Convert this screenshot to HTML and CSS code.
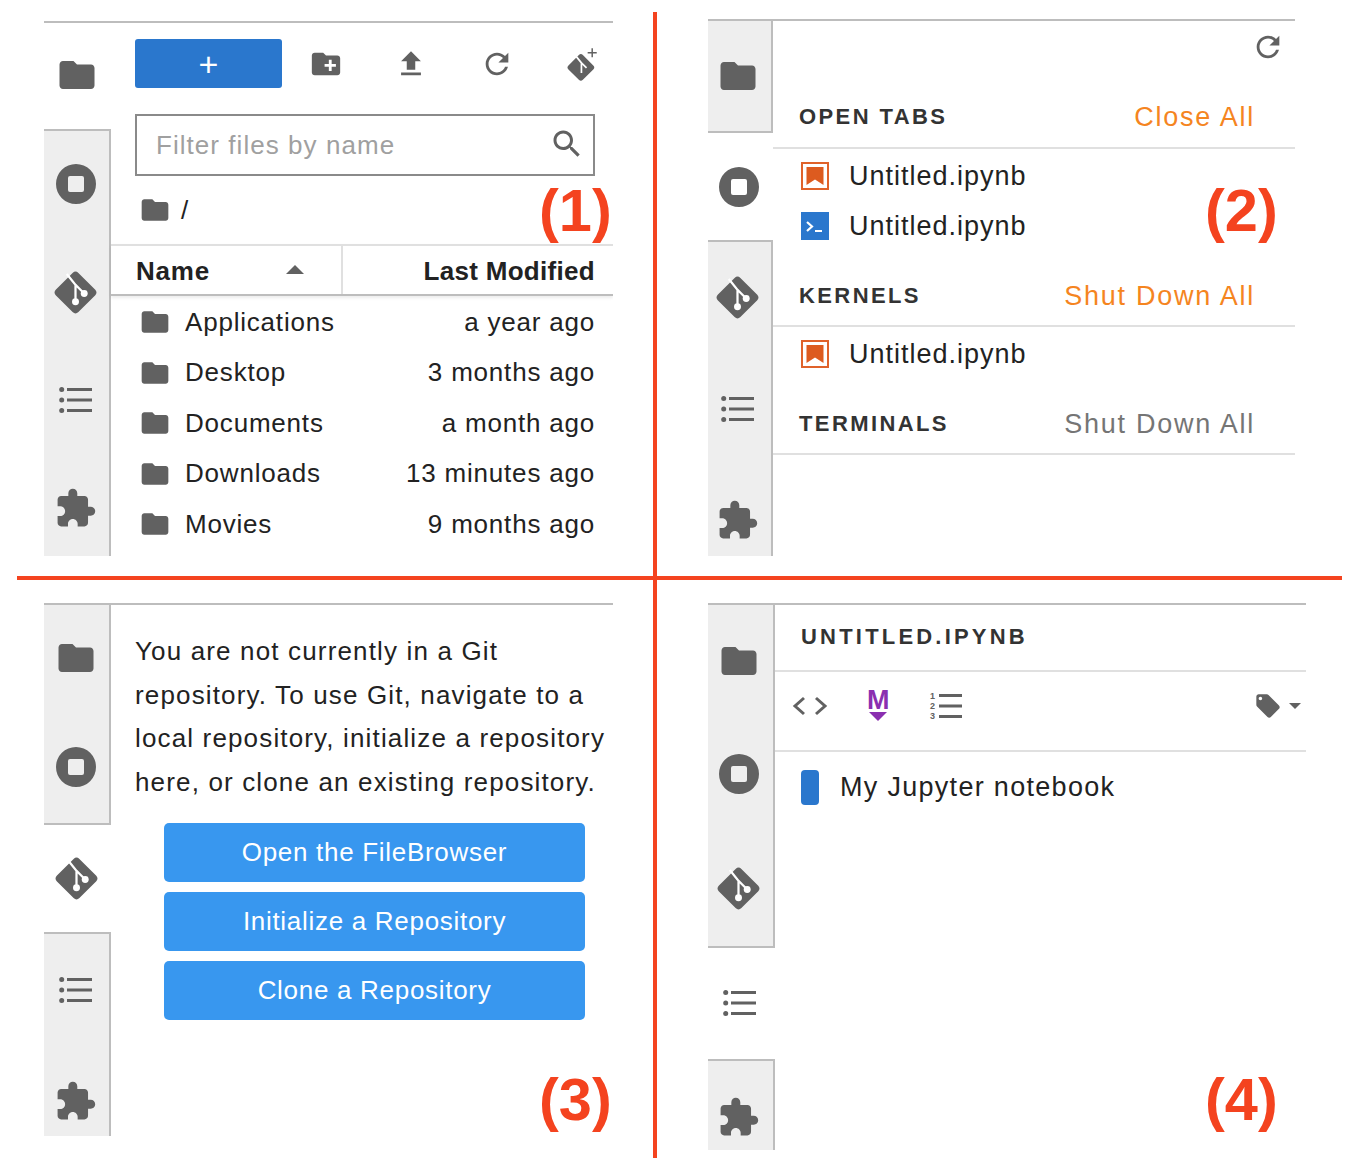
FILE: index.html
```html
<!DOCTYPE html>
<html lang="en">
<head>
    <meta charset="UTF-8" />
    <title>JupyterLab sidebar panels</title>
    <link rel="stylesheet" href="styles.css">
</head>
<body>
    <svg class="sprite" xmlns="http://www.w3.org/2000/svg">
        <symbol id="i-folder" viewBox="0 0 24 24"><path d="M10 4H4c-1.1 0-1.99.9-1.99 2L2 18c0 1.1.9 2 2 2h16c1.1 0 2-.9 2-2V8c0-1.1-.9-2-2-2h-8l-2-2z"/></symbol>
        <symbol id="i-stop" viewBox="0 0 40 40"><path fill-rule="evenodd" d="M20 0a20 20 0 1 0 0 40a20 20 0 1 0 0-40zM14 12h12a2 2 0 0 1 2 2v12a2 2 0 0 1-2 2H14a2 2 0 0 1-2-2V14a2 2 0 0 1 2-2z"/></symbol>
        <symbol id="i-git" viewBox="0 0 42 42">
            <rect x="5.5" y="5.5" width="31" height="31" rx="4" transform="rotate(45 21 21)"/>
            <path d="M12.500 3L21 13.500V30M21 13.500L29.500 22" fill="none" stroke="#fff" stroke-width="2.200"/>
            <circle cx="21" cy="30" r="3.400" fill="#fff"/>
            <circle cx="29.500" cy="22" r="3.400" fill="#fff"/>
        </symbol>
        <symbol id="i-list" viewBox="0 0 34 28">
            <circle cx="2.700" cy="3.500" r="2.500"/><circle cx="2.700" cy="14" r="2.500"/><circle cx="2.700" cy="24.500" r="2.500"/>
            <rect x="8" y="2" width="25" height="3"/><rect x="8" y="12.500" width="25" height="3"/><rect x="8" y="23" width="25" height="3"/>
        </symbol>
        <symbol id="i-puzzle" viewBox="0 0 24 24"><path d="M20.500 11H19V7c0-1.100-.9-2-2-2h-4V3.500C13 2.120 11.880 1 10.500 1S8 2.120 8 3.500V5H4c-1.100 0-1.990.9-1.990 2v3.800H3.500c1.490 0 2.700 1.210 2.700 2.700s-1.210 2.700-2.700 2.700H2V20c0 1.100.9 2 2 2h3.800v-1.500c0-1.490 1.210-2.700 2.700-2.700 1.490 0 2.700 1.210 2.700 2.700V22H17c1.100 0 2-.9 2-2v-4h1.500c1.380 0 2.500-1.120 2.500-2.500S21.880 11 20.500 11z"/></symbol>
        <symbol id="i-newfolder" viewBox="0 0 24 24"><path d="M20 6h-8l-2-2H4c-1.110 0-1.990.89-1.990 2L2 18c0 1.110.89 2 2 2h16c1.110 0 2-.89 2-2V8c0-1.110-.89-2-2-2zm-1 8h-3v3h-2v-3h-3v-2h3V9h2v3h3v2z"/></symbol>
        <symbol id="i-upload" viewBox="0 0 24 24"><path d="M9 16h6v-6h4l-7-7-7 7h4v6zm-4 2h14v2H5v-2z"/></symbol>
        <symbol id="i-refresh" viewBox="0 0 24 24"><path d="M17.650 6.350C16.200 4.900 14.210 4 12 4c-4.420 0-7.990 3.580-7.990 8s3.570 8 7.990 8c3.730 0 6.840-2.550 7.730-6h-2.080c-.82 2.330-3.040 4-5.650 4-3.310 0-6-2.690-6-6s2.690-6 6-6c1.660 0 3.140.69 4.220 1.780L13 11h7V4l-2.350 2.350z"/></symbol>
        <symbol id="i-clone" viewBox="0 0 30 30">
            <rect x="5" y="9" width="18" height="18" rx="2.500" transform="rotate(45 14 18)"/>
            <path d="M10 8.500L14.500 14V23M14.500 14L19 18.500" fill="none" stroke="#fff" stroke-width="1.500"/>
            <path d="M24 1v8M20 5h8" fill="none" stroke-width="1.300" stroke="#616161"/>
        </symbol>
        <symbol id="i-search" viewBox="0 0 24 24"><path d="M15.500 14h-.79l-.28-.27C15.410 12.590 16 11.110 16 9.500 16 5.910 13.090 3 9.500 3S3 5.910 3 9.500 5.910 16 9.500 16c1.610 0 3.090-.59 4.230-1.570l.27.28v.79l5 4.990L20.490 19l-4.990-5zm-6 0C7.010 14 5 11.990 5 9.500S7.010 5 9.500 5 14 7.010 14 9.500 11.990 14 9.500 14z"/></symbol>
        <symbol id="i-notebook" viewBox="0 0 28 28">
            <rect x="1" y="1" width="26" height="26" fill="#fff" stroke="#e0622a" stroke-width="2"/>
            <path d="M5.500 5h17v18L14 17.500 5.500 23z" fill="#dd5b1f"/>
        </symbol>
        <symbol id="i-terminal" viewBox="0 0 28 28">
            <rect width="28" height="28" fill="#2a77cd"/>
            <path d="M6 10l5 4.500-5 4.500" fill="none" stroke="#fff" stroke-width="2.200"/>
            <rect x="14" y="18" width="7" height="2" fill="#fff"/>
        </symbol>
        <symbol id="i-code" viewBox="0 0 36 24">
            <path d="M12 4L3 12l9 8M24 4l9 8-9 8" fill="none" stroke="#616161" stroke-width="3"/>
        </symbol>
        <symbol id="i-numbers" viewBox="0 0 34 30">
            <rect x="10" y="3" width="23" height="3"/><rect x="10" y="13.500" width="23" height="3"/><rect x="10" y="24" width="23" height="3"/>
        </symbol>
        <symbol id="i-tag" viewBox="0 0 24 24"><path d="M21.410 11.580l-9-9C12.050 2.220 11.550 2 11 2H4c-1.100 0-2 .9-2 2v7c0 .55.22 1.050.59 1.420l9 9c.36.36.86.58 1.410.58s1.050-.22 1.410-.59l7-7c.37-.36.59-.86.59-1.410s-.23-1.060-.59-1.420zM5.500 7C4.670 7 4 6.330 4 5.500S4.670 4 5.500 4 7 4.670 7 5.500 6.330 7 5.500 7z"/></symbol>
    </svg>

    <div class="board">
        <!-- 1: file browser -->
        <section class="cell cell-tl">
            <div class="panel panel-1">
                <div class="rail">
                    <div class="tab on"><svg class="ic-folder"><use href="#i-folder"/></svg></div>
                    <div class="tab"><svg class="ic-stop"><use href="#i-stop"/></svg></div>
                    <div class="tab"><svg class="ic-git"><use href="#i-git"/></svg></div>
                    <div class="tab"><svg class="ic-list"><use href="#i-list"/></svg></div>
                    <div class="tab"><svg class="ic-puzzle"><use href="#i-puzzle"/></svg></div>
                </div>
                <div class="main">
                    <div class="toolbar">
                        <div class="btn-new">+</div>
                        <svg class="tool tool-folder"><use href="#i-newfolder"/></svg>
                        <svg class="tool tool-upload"><use href="#i-upload"/></svg>
                        <svg class="tool tool-refresh"><use href="#i-refresh"/></svg>
                        <svg class="tool tool-clone"><use href="#i-clone"/></svg>
                    </div>
                    <div class="filter">
                        <span>Filter files by name</span>
                        <svg class="ic-search"><use href="#i-search"/></svg>
                    </div>
                    <div class="crumbs">
                        <svg class="ic-small"><use href="#i-folder"/></svg>
                        <span>/</span>
                    </div>
                    <div class="thead">
                        <div class="th-name">Name <i class="sort"></i></div>
                        <div class="th-date">Last Modified</div>
                    </div>
                    <div class="frow"><svg class="ic-small"><use href="#i-folder"/></svg><span class="fname">Applications</span><span>a year ago</span></div>
                    <div class="frow"><svg class="ic-small"><use href="#i-folder"/></svg><span class="fname">Desktop</span><span>3 months ago</span></div>
                    <div class="frow"><svg class="ic-small"><use href="#i-folder"/></svg><span class="fname">Documents</span><span>a month ago</span></div>
                    <div class="frow"><svg class="ic-small"><use href="#i-folder"/></svg><span class="fname">Downloads</span><span>13 minutes ago</span></div>
                    <div class="frow"><svg class="ic-small"><use href="#i-folder"/></svg><span class="fname">Movies</span><span>9 months ago</span></div>
                </div>
            </div>
            <div class="mark mark-1">(1)</div>
        </section>

        <!-- 2: running sessions -->
        <section class="cell cell-tr">
            <div class="panel panel-2">
                <div class="rail">
                    <div class="tab"><svg class="ic-folder"><use href="#i-folder"/></svg></div>
                    <div class="tab on"><svg class="ic-stop"><use href="#i-stop"/></svg></div>
                    <div class="tab"><svg class="ic-git"><use href="#i-git"/></svg></div>
                    <div class="tab"><svg class="ic-list"><use href="#i-list"/></svg></div>
                    <div class="tab"><svg class="ic-puzzle"><use href="#i-puzzle"/></svg></div>
                </div>
                <div class="main">
                    <div class="running-top"><svg class="tool tool-refresh"><use href="#i-refresh"/></svg></div>
                    <div class="sec-head sec-tabs"><span class="sec-title">OPEN TABS</span><span class="sec-link">Close All</span></div>
                    <div class="sess first"><svg class="ic-sess"><use href="#i-notebook"/></svg><span>Untitled.ipynb</span></div>
                    <div class="sess"><svg class="ic-sess"><use href="#i-terminal"/></svg><span>Untitled.ipynb</span></div>
                    <div class="sec-head sec-kern"><span class="sec-title">KERNELS</span><span class="sec-link">Shut Down All</span></div>
                    <div class="sess first"><svg class="ic-sess"><use href="#i-notebook"/></svg><span>Untitled.ipynb</span></div>
                    <div class="sec-head sec-term"><span class="sec-title">TERMINALS</span><span class="sec-link off">Shut Down All</span></div>
                </div>
            </div>
            <div class="mark mark-2">(2)</div>
        </section>

        <!-- 3: git -->
        <section class="cell cell-bl">
            <div class="panel panel-3">
                <div class="rail">
                    <div class="tab"><svg class="ic-folder"><use href="#i-folder"/></svg></div>
                    <div class="tab"><svg class="ic-stop"><use href="#i-stop"/></svg></div>
                    <div class="tab on"><svg class="ic-git"><use href="#i-git"/></svg></div>
                    <div class="tab"><svg class="ic-list"><use href="#i-list"/></svg></div>
                    <div class="tab"><svg class="ic-puzzle"><use href="#i-puzzle"/></svg></div>
                </div>
                <div class="main git">
                    <p class="git-msg">You are not currently in a Git<br>repository. To use Git, navigate to a<br>local repository, initialize a repository<br>here, or clone an existing repository.</p>
                    <div class="git-btn">Open the FileBrowser</div>
                    <div class="git-btn">Initialize a Repository</div>
                    <div class="git-btn">Clone a Repository</div>
                </div>
            </div>
            <div class="mark mark-3">(3)</div>
        </section>

        <!-- 4: table of contents -->
        <section class="cell cell-br">
            <div class="panel panel-4">
                <div class="rail">
                    <div class="tab"><svg class="ic-folder"><use href="#i-folder"/></svg></div>
                    <div class="tab"><svg class="ic-stop"><use href="#i-stop"/></svg></div>
                    <div class="tab"><svg class="ic-git"><use href="#i-git"/></svg></div>
                    <div class="tab on"><svg class="ic-list"><use href="#i-list"/></svg></div>
                    <div class="tab"><svg class="ic-puzzle"><use href="#i-puzzle"/></svg></div>
                </div>
                <div class="main">
                    <div class="toc-title">UNTITLED.IPYNB</div>
                    <div class="toc-tools">
                        <svg class="ic-code"><use href="#i-code"/></svg>
                        <div class="ic-md"><b>M</b><i></i></div>
                        <div class="ic-nums">
                            <span>1<br>2<br>3</span>
                            <svg><use href="#i-numbers"/></svg>
                        </div>
                        <svg class="ic-tag"><use href="#i-tag"/></svg>
                        <i class="caret"></i>
                    </div>
                    <div class="toc-row"><i class="pill"></i><span>My Jupyter notebook</span></div>
                </div>
            </div>
            <div class="mark mark-4">(4)</div>
        </section>
    </div>
</body>
</html>
```

FILE: styles.css
```css
/* General */
body {
    margin: 0;
    background-color: #fff;
    font-family: "Liberation Sans", Arial, sans-serif;
    font-size: 26px;
    letter-spacing: 0.8px;
    color: #222;
}

svg {
    display: block;
    fill: #616161;
    flex: none;
}

.sprite {
    display: none;
}

/* Board with red dividers */
.board {
    display: grid;
    grid-template-columns: 640px 685px;
    grid-template-rows: 568px 578px;
    width: 1325px;
    margin: 12px 0 0 17px;
}

.cell {
    position: relative;
    overflow: hidden;
}

.cell-tl {
    padding: 9px 0 0 27px;
    border-right: 4px solid #f4431f;
    border-bottom: 4px solid #f4431f;
}

.cell-tr {
    padding: 7px 0 0 51px;
    border-bottom: 4px solid #f4431f;
}

.cell-bl {
    padding: 23px 0 0 27px;
    border-right: 4px solid #f4431f;
}

.cell-br {
    padding: 23px 0 0 51px;
}

.mark {
    position: absolute;
    font-weight: bold;
    font-size: 59.500px;
    line-height: 66px;
    letter-spacing: 0;
    color: #f4431f;
}

.mark-1 { left: 522px; top: 166px; }
.mark-2 { left: 548px; top: 166px; }
.mark-3 { left: 522px; top: 487px; }
.mark-4 { left: 548px; top: 487px; }

/* Panel shell */
.panel {
    display: flex;
    border-top: 2px solid #bdbdbd;
    overflow: hidden;
}

.panel-1 { width: 569px; height: 533px; }
.panel-2 { width: 587px; height: 535px; }
.panel-3 { width: 569px; height: 531px; }
.panel-4 { width: 598px; height: 545px; }

.rail {
    display: flex;
    flex-direction: column;
    flex: none;
    width: 67px;
}

.panel-2 .rail { width: 65px; }

.tab {
    display: flex;
    flex: none;
    align-items: center;
    justify-content: center;
    box-sizing: border-box;
    padding-right: 2px;
    background-color: #eee;
    border-right: 2px solid #bdbdbd;
}

.panel-2 .tab, .panel-4 .tab { padding-right: 4px; }

.panel-1 .tab { height: 108px; padding-bottom: 2px; }
.panel-2 .tab { height: 111.500px; }
.panel-2 .tab:first-child { height: 110px; }
.panel-2 .tab.on { height: 111px; }
.panel-3 .tab { height: 111.500px; }
.panel-3 .tab:first-child { height: 106px; }
.panel-4 .tab { height: 114.500px; }
.panel-4 .tab:first-child { height: 112px; }

.tab.on {
    background-color: #fff;
    border-right: none;
    border-bottom: 2px solid #bdbdbd;
}

.tab + .tab.on {
    border-top: 2px solid #bdbdbd;
}

.ic-folder { width: 42px; height: 42px; }
.ic-stop { width: 40px; height: 40px; }
.ic-git { width: 43px; height: 43px; }
.ic-list { width: 34px; height: 28px; }
.ic-puzzle { width: 43px; height: 43px; }

.main {
    flex: 1;
    min-width: 0;
}

/* 1: file browser */
.toolbar {
    display: flex;
    align-items: center;
    height: 49px;
    margin: 16px 0 26px 24px;
}

.btn-new {
    width: 147px;
    height: 49px;
    line-height: 50px;
    text-align: center;
    color: #fff;
    font-size: 34px;
    letter-spacing: 0;
    background-color: #2a77cd;
    border-radius: 3px;
}

.tool {
    width: 34px;
    height: 34px;
}

.tool-folder { margin-left: 27px; }
.tool-upload { margin-left: 51px; }
.tool-refresh { margin-left: 52px; }
.tool-clone { margin-left: 51px; }

.filter {
    display: flex;
    align-items: center;
    justify-content: space-between;
    box-sizing: border-box;
    width: 460px;
    height: 62px;
    margin-left: 24px;
    padding: 0 8px 0 19px;
    border: 2px solid #8a8a8a;
    letter-spacing: 1.050px;
    color: #a0a0a0;
}

.ic-search {
    width: 36px;
    height: 36px;
    margin-bottom: 3px;
}

.crumbs {
    display: flex;
    align-items: center;
    gap: 10px;
    height: 68px;
    margin-left: 28px;
}

.ic-small {
    width: 32px;
    height: 32px;
}

.thead {
    display: flex;
    box-sizing: border-box;
    height: 52px;
    margin-bottom: 1px;
    border-top: 2px solid #e0e0e0;
    border-bottom: 2px solid #bdbdbd;
    box-shadow: 0 2px 3px rgba(0,0,0,0.08);
    font-weight: bold;
    line-height: 50px;
}

.th-name {
    position: relative;
    box-sizing: border-box;
    width: 232px;
    padding-left: 25px;
    border-right: 2px solid #e0e0e0;
}

.sort {
    position: absolute;
    left: 175px;
    top: 19px;
    border-left: 9px solid transparent;
    border-right: 9px solid transparent;
    border-bottom: 9px solid #616161;
}

.th-date {
    flex: 1;
    padding-right: 18px;
    text-align: right;
    letter-spacing: 0.300px;
}

.frow {
    display: flex;
    align-items: center;
    height: 50.500px;
    padding: 0 18px 0 28px;
}

.fname {
    flex: 1;
    margin-left: 14px;
}

/* 2: running sessions */
.running-top {
    display: flex;
    justify-content: flex-end;
    height: 60px;
    padding: 9px 10px 0 0;
    box-sizing: border-box;
}

.running-top .tool {
    margin: 0;
}

.sec-head {
    display: flex;
    align-items: center;
    justify-content: space-between;
    box-sizing: border-box;
    height: 68px;
    padding: 6px 40px 0 26px;
    border-bottom: 2px solid #e0e0e0;
}

.sec-kern {
    height: 76px;
    padding-top: 16px;
}

.sec-term {
    height: 76px;
    padding-top: 16px;
}

.sec-title {
    font-size: 22px;
    font-weight: bold;
    letter-spacing: 2.400px;
    color: #333;
}

.sec-link {
    font-size: 27px;
    letter-spacing: 1.750px;
    color: #f5851f;
}

.sec-link.off {
    color: #757575;
}

.sess {
    display: flex;
    align-items: center;
    gap: 20px;
    height: 50px;
    padding-left: 28px;
    font-size: 27px;
    letter-spacing: 1px;
}

.sess.first {
    margin-top: 2px;
}

.ic-sess {
    width: 28px;
    height: 28px;
}

/* 3: git */
.git-msg {
    margin: 25px 0 18px 24px;
    line-height: 43.700px;
    letter-spacing: 1.150px;
    white-space: nowrap;
}

.git-btn {
    width: 421px;
    height: 59px;
    margin: 0 0 10px 53px;
    line-height: 59px;
    text-align: center;
    letter-spacing: 0.700px;
    color: #fff;
    background-color: #3897ef;
    border-radius: 5px;
}

/* 4: table of contents */
.toc-title {
    box-sizing: border-box;
    height: 67px;
    padding-left: 26px;
    line-height: 64px;
    font-size: 22px;
    font-weight: bold;
    letter-spacing: 3.200px;
    color: #333;
    border-bottom: 2px solid #e0e0e0;
}

.toc-tools {
    display: flex;
    align-items: center;
    box-sizing: border-box;
    height: 80px;
    padding: 0 0 10px 17px;
    border-bottom: 2px solid #e0e0e0;
}

.ic-code {
    width: 36px;
    height: 24px;
}

.ic-md {
    width: 22px;
    margin-left: 39px;
    text-align: center;
}

.ic-md b {
    display: block;
    height: 19px;
    font-size: 27px;
    line-height: 19px;
    letter-spacing: 0;
    color: #8a2fb0;
}

.ic-md i {
    display: block;
    width: 0;
    margin: 2px auto 0;
    border-left: 9px solid transparent;
    border-right: 9px solid transparent;
    border-top: 9px solid #8a2fb0;
}

.ic-nums {
    position: relative;
    width: 34px;
    height: 30px;
    margin-left: 40px;
}

.ic-nums svg {
    width: 34px;
    height: 30px;
}

.ic-nums span {
    position: absolute;
    left: 1px;
    top: 0;
    font-size: 9px;
    line-height: 10px;
    font-weight: bold;
    letter-spacing: 0;
    color: #616161;
}

.ic-tag {
    width: 28px;
    height: 28px;
    margin-left: auto;
}

.caret {
    margin: 0 5px 0 7px;
    border-left: 6px solid transparent;
    border-right: 6px solid transparent;
    border-top: 6px solid #616161;
}

.toc-row {
    display: flex;
    align-items: center;
    gap: 21px;
    height: 70px;
    padding-left: 26px;
    font-size: 27px;
    letter-spacing: 1.300px;
}

.pill {
    width: 18px;
    height: 35px;
    background-color: #2a77cd;
    border-radius: 4px;
}
```
